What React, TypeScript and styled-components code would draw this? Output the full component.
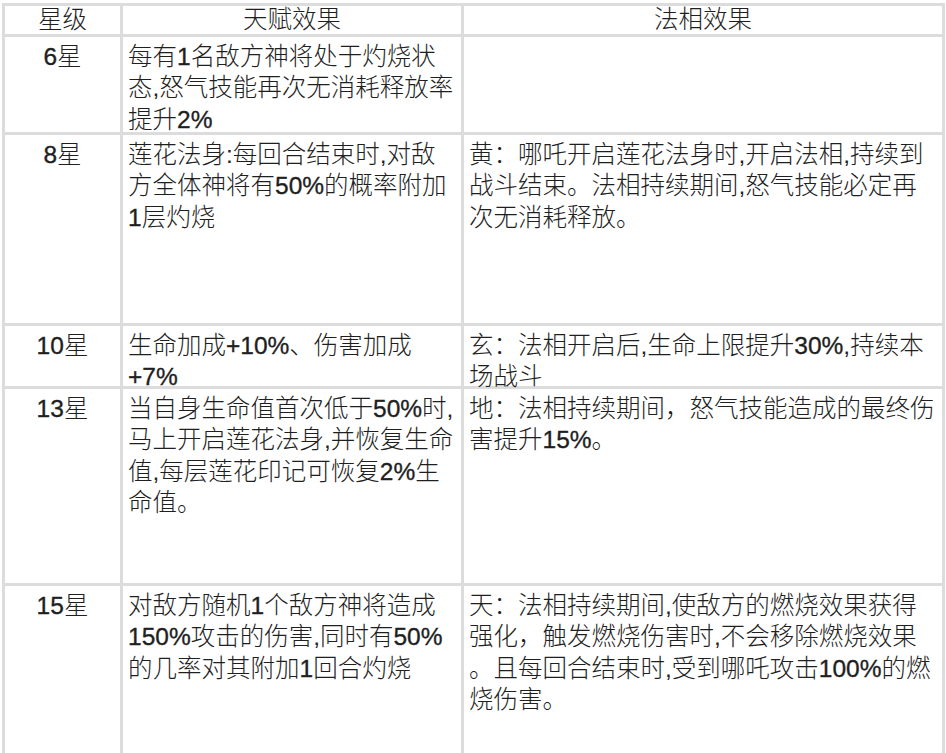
import React from "react";
import styled, { createGlobalStyle } from "styled-components";

const GlobalStyle = createGlobalStyle`
  html, body {
    margin: 0;
    padding: 0;
    background: #ffffff;
    overflow: hidden;
  }
  body {
    font-family: "Liberation Sans", "Noto Sans CJK SC", sans-serif;
    font-weight: 300;
    color: #1f1f1f;
  }
`;

const Sheet = styled.div`
  box-sizing: border-box;
  width: 943px;
  margin: 3px 0 0 2px;
  padding: 3px;
  display: grid;
  grid-template-columns: 115px 338px 478px;
  grid-template-rows: 28px 95px 188px 60px 194px 170px;
  gap: 3px;
  background: #dcdcdc;
`;

const HeadCell = styled.div`
  background: #ffffff;
  font-size: 24.5px;
  line-height: 28px;
  text-align: center;
  white-space: nowrap;
`;

const StarCell = styled.div`
  background: #ffffff;
  font-size: 24.5px;
  line-height: 31.3px;
  padding-top: 4px;
  text-align: center;
`;

const TextCell = styled.div<{ $anywhere?: boolean }>`
  background: #ffffff;
  font-size: 24.5px;
  line-height: 31.3px;
  padding: 4px 4px 0 5px;
  text-align: left;
  text-spacing-trim: space-all;
  line-break: ${(p) => (p.$anywhere ? "anywhere" : "auto")};
`;

const Num = styled.span`
  -webkit-text-stroke: 0.35px currentColor;
`;

function Rich({ text }: { text: string }) {
  const parts = text.split(/([0-9+%]+)/);
  return (
    <>
      {parts.map((p, i) =>
        /^[0-9+%]+$/.test(p) ? <Num key={i}>{p}</Num> : <React.Fragment key={i}>{p}</React.Fragment>
      )}
    </>
  );
}

type Row = { star: string; talent: string; faxiang: string; anywhere?: boolean };

const rows: Row[] = [
  {
    star: "6星",
    talent: "每有1名敌方神将处于灼烧状态,怒气技能再次无消耗释放率提升2%",
    faxiang: "",
  },
  {
    star: "8星",
    talent: "莲花法身:每回合结束时,对敌方全体神将有50%的概率附加1层灼烧",
    faxiang: "黄：哪吒开启莲花法身时,开启法相,持续到战斗结束。法相持续期间,怒气技能必定再次无消耗释放。",
  },
  {
    star: "10星",
    talent: "生命加成+10%、伤害加成+7%",
    faxiang: "玄：法相开启后,生命上限提升30%,持续本场战斗",
  },
  {
    star: "13星",
    talent: "当自身生命值首次低于50%时,马上开启莲花法身,并恢复生命值,每层莲花印记可恢复2%生命值。",
    faxiang: "地：法相持续期间，怒气技能造成的最终伤害提升15%。",
  },
  {
    star: "15星",
    talent: "对敌方随机1个敌方神将造成150%攻击的伤害,同时有50%的几率对其附加1回合灼烧",
    faxiang: "天：法相持续期间,使敌方的燃烧效果获得强化，触发燃烧伤害时,不会移除燃烧效果。且每回合结束时,受到哪吒攻击100%的燃烧伤害。",
    anywhere: true,
  },
];

export default function App() {
  return (
    <>
      <GlobalStyle />
      <Sheet>
        <HeadCell>星级</HeadCell>
        <HeadCell>天赋效果</HeadCell>
        <HeadCell>法相效果</HeadCell>
        {rows.map((r) => (
          <React.Fragment key={r.star}>
            <StarCell>
              <Rich text={r.star} />
            </StarCell>
            <TextCell>
              <Rich text={r.talent} />
            </TextCell>
            <TextCell $anywhere={r.anywhere}>
              <Rich text={r.faxiang} />
            </TextCell>
          </React.Fragment>
        ))}
      </Sheet>
    </>
  );
}
